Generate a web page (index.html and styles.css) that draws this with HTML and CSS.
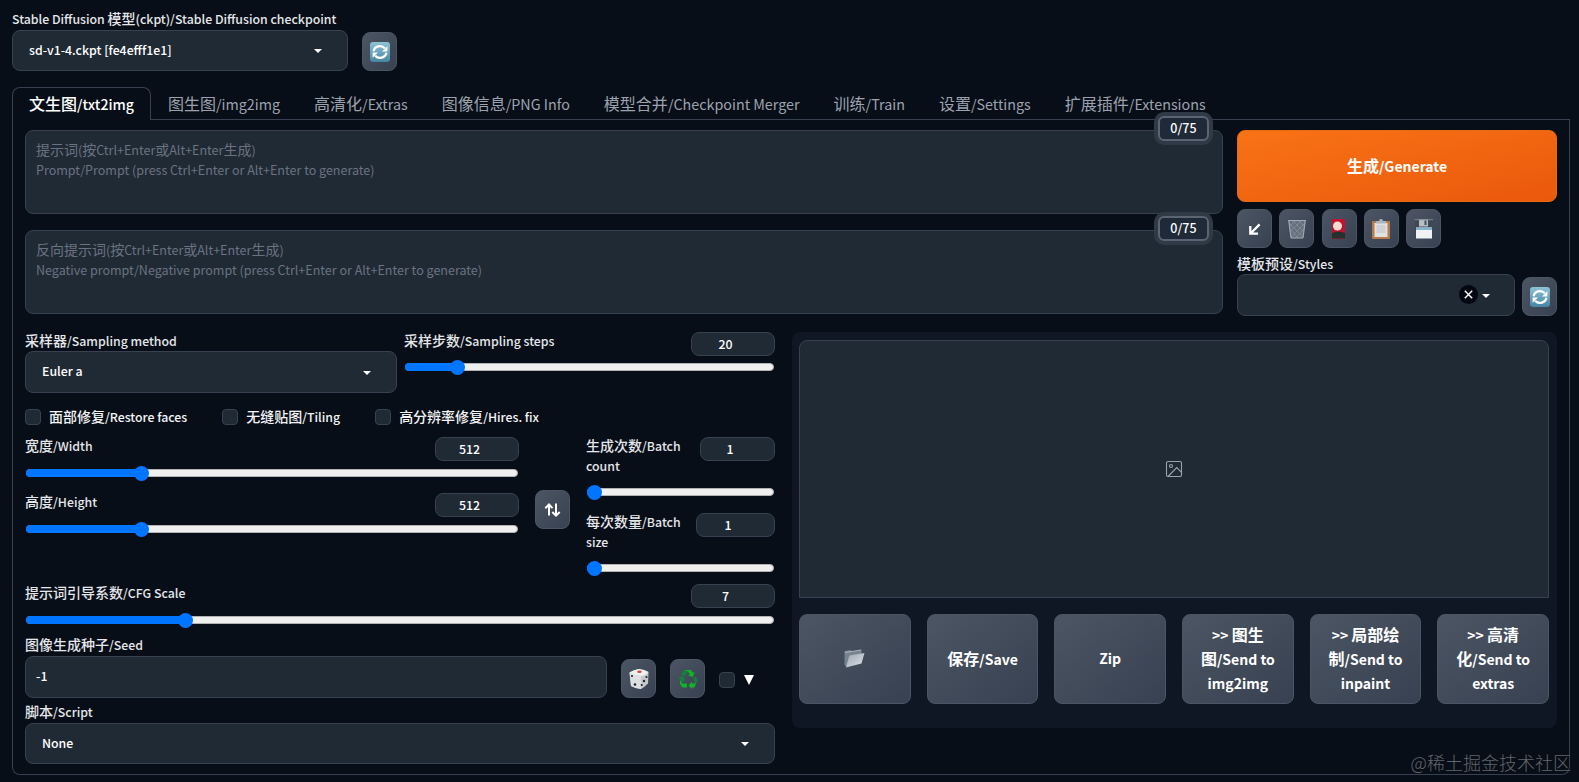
FILE: index.html
```html
<!DOCTYPE html>
<html lang="zh-CN">
<head>
    <meta charset="utf-8">
    <title>Stable Diffusion</title>
    <link rel="stylesheet" href="styles.css">
</head>
<body>
    <!-- shared icons -->
    <svg class="defs" width="0" height="0">
        <defs>
            <linearGradient id="blue" x1="0" y1="0" x2="0" y2="1">
                <stop offset="0" stop-color="#8fc3d6"/>
                <stop offset="1" stop-color="#4684a3"/>
            </linearGradient>
            <linearGradient id="silver" x1="0" y1="0" x2="1" y2="1">
                <stop offset="0" stop-color="#9ba5b0"/>
                <stop offset="1" stop-color="#dde1e8"/>
            </linearGradient>
            <symbol id="refresh" viewBox="0 0 20 20">
                <rect width="20" height="20" rx="3" fill="url(#blue)"/>
                <path d="M3.6 9.2A6.4 6 0 0 1 14.8 6.3M16.4 10.8A6.4 6 0 0 1 5.2 13.7" fill="none" stroke="#fff" stroke-width="2.2"/>
                <path d="M17.4 4.2v5.2h-5.4zM2.6 15.8v-5.2h5.4z" fill="#fff"/>
            </symbol>
        </defs>
    </svg>

    <header class="quick">
        <div class="checkpoint">
            <label class="label"><span class="en">Stable Diffusion </span>模型<span class="en">(ckpt)/Stable Diffusion checkpoint</span></label>
            <div class="select"><span class="value"><span class="en">sd-v1-4.ckpt [fe4efff1e1]</span></span><i class="caret"></i></div>
        </div>
        <button class="tool"><svg width="20" height="20"><use href="#refresh"/></svg></button>
    </header>

    <nav class="tabs">
        <a class="tab active">文生图<span class="en">/txt2img</span></a>
        <a class="tab">图生图<span class="en">/img2img</span></a>
        <a class="tab">高清化<span class="en">/Extras</span></a>
        <a class="tab">图像信息<span class="en">/PNG Info</span></a>
        <a class="tab">模型合并<span class="en">/Checkpoint Merger</span></a>
        <a class="tab">训练<span class="en">/Train</span></a>
        <a class="tab">设置<span class="en">/Settings</span></a>
        <a class="tab">扩展插件<span class="en">/Extensions</span></a>
    </nav>

    <main class="panel">
        <section class="top">
            <div class="prompts">
                <div class="prompt">
                    <span class="counter">0/75</span>
                    提示词<span class="en">(</span>按<span class="en">Ctrl+Enter</span>或<span class="en">Alt+Enter</span>生成<span class="en">)</span><br>
                    <span class="en">Prompt/Prompt (press Ctrl+Enter or Alt+Enter to generate)</span>
                </div>
                <div class="prompt">
                    <span class="counter">0/75</span>
                    反向提示词<span class="en">(</span>按<span class="en">Ctrl+Enter</span>或<span class="en">Alt+Enter</span>生成<span class="en">)</span><br>
                    <span class="en">Negative prompt/Negative prompt (press Ctrl+Enter or Alt+Enter to generate)</span>
                </div>
            </div>
            <div class="actions">
                <button class="generate">生成<span class="en">/Generate</span></button>
                <div class="tools">
                    <button class="tool">
                        <svg width="20" height="20" viewBox="0 0 20 20"><path d="M14.6 5.4L5.8 14.2M5.3 7v7.7H13" fill="none" stroke="#fff" stroke-width="2.3"/></svg>
                    </button>
                    <button class="tool">
                        <svg width="20" height="20" viewBox="0 0 20 20">
                            <path d="M1.5 1.5L4 19h12l2.500-17.500z" fill="#66717d"/>
                            <path d="M2 4l14 14M6 2l11 11M12 2l6 6M2.500 9l8 9.500M18 4L4 18M14 2L3 13M8 2L2 8M17.500 9L9 18.500" stroke="#87919c" stroke-width=".7"/>
                            <path d="M1 1.500h18M4 19h12M1.800 2L4 19M18.200 2L16 19" stroke="#a3abb5" stroke-width="1.100" fill="none"/>
                        </svg>
                    </button>
                    <button class="tool">
                        <svg width="20" height="20" viewBox="0 0 20 20">
                            <rect x="3" y="0" width="13" height="20" rx="1" fill="#c3122f"/>
                            <path d="M3 14q6.500-3 13 0v5.500H3z" fill="#27302b"/>
                            <circle cx="8.500" cy="7" r="4.500" fill="#f5dcd2"/>
                        </svg>
                    </button>
                    <button class="tool">
                        <svg width="20" height="20" viewBox="0 0 20 20">
                            <rect x="1" y="2" width="18" height="18" rx="1" fill="#b87a4b"/>
                            <path d="M3.500 4h13v14h-13z" fill="#e0e1e3"/>
                            <path d="M5.500 6h9v8h-9z" fill="#cfd1d4"/>
                            <path d="M5 2h3q0-2 2-2t2 2h3v2.500H5z" fill="#a9b5bf"/>
                        </svg>
                    </button>
                    <button class="tool">
                        <svg width="20" height="20" viewBox="0 0 20 20">
                            <path d="M1 .5h17.500v19H2.500L1 18z" fill="#3d4856"/>
                            <path d="M5 0h9v7.500H5z" fill="#b9bec5"/>
                            <path d="M10.500 1.500h2v4.500h-2z" fill="#444d59"/>
                            <path d="M2 8.500h16v11H2z" fill="#f0f2f3"/>
                            <path d="M2 8.500h16v2.500H2z" fill="#86b4cd"/>
                            <path d="M.5 .700h18.500" stroke="#7c8792"/>
                        </svg>
                    </button>
                </div>
                <div class="styles">
                    <div class="styles-field">
                        <label class="label">模板预设<span class="en">/Styles</span></label>
                        <div class="select">
                            <span class="value"></span>
                            <svg class="clear" width="19" height="19" viewBox="0 0 19 19"><circle cx="9.500" cy="9.500" r="9.500" fill="#030712"/><path d="M5.800 5.800l7.400 7.400M13.200 5.800l-7.400 7.400" stroke="#fff" stroke-width="1.400"/></svg>
                            <i class="caret"></i>
                        </div>
                    </div>
                    <button class="tool"><svg width="20" height="20"><use href="#refresh"/></svg></button>
                </div>
            </div>
        </section>

        <section class="columns">
            <div class="settings">
                <div class="sampling">
                    <div class="method">
                        <label class="label">采样器<span class="en">/Sampling method</span></label>
                        <div class="select"><span class="value"><span class="en">Euler a</span></span><i class="caret"></i></div>
                    </div>
                    <div class="slider steps">
                        <div class="head"><label class="label">采样步数<span class="en">/Sampling steps</span></label><span class="number"><span class="en">20</span></span></div>
                        <div class="track"><div class="fill" style="width: 14.100%"></div></div>
                    </div>
                </div>

                <div class="checks">
                    <label class="check"><i class="box"></i><span class="text">面部修复<span class="en">/Restore faces</span></span></label>
                    <label class="check"><i class="box"></i><span class="text">无缝贴图<span class="en">/Tiling</span></span></label>
                    <label class="check"><i class="box"></i><span class="text">高分辨率修复<span class="en">/Hires. fix</span></span></label>
                </div>

                <div class="dims">
                    <div class="size">
                        <div class="slider">
                            <div class="head"><label class="label">宽度<span class="en">/Width</span></label><span class="number"><span class="en">512</span></span></div>
                            <div class="track"><div class="fill" style="width: 23.400%"></div></div>
                        </div>
                        <div class="slider">
                            <div class="head"><label class="label">高度<span class="en">/Height</span></label><span class="number"><span class="en">512</span></span></div>
                            <div class="track"><div class="fill" style="width: 23.400%"></div></div>
                        </div>
                    </div>
                    <button class="tool swap">
                        <svg width="18" height="16" viewBox="0 0 18 16"><path d="M5 13.500V2.500M1.300 6.300L5 2.500l3.500 3.600M12 1.500v12M8.300 10l3.700 3.700L15.700 10" fill="none" stroke="#fff" stroke-width="2"/></svg>
                    </button>
                    <div class="batch">
                        <div class="slider">
                            <div class="head"><label class="label">生成次数<span class="en">/Batch<br>count</span></label><span class="number count"><span class="en">1</span></span></div>
                            <div class="track"><div class="fill" style="width: 3.700%"></div></div>
                        </div>
                        <div class="slider">
                            <div class="head"><label class="label">每次数量<span class="en">/Batch<br>size</span></label><span class="number per"><span class="en">1</span></span></div>
                            <div class="track"><div class="fill" style="width: 3.700%"></div></div>
                        </div>
                    </div>
                </div>

                <div class="slider cfg">
                    <div class="head"><label class="label">提示词引导系数<span class="en">/CFG Scale</span></label><span class="number"><span class="en">7</span></span></div>
                    <div class="track"><div class="fill" style="width: 21.300%"></div></div>
                </div>

                <div class="seed">
                    <div class="seed-field">
                        <label class="label">图像生成种子<span class="en">/Seed</span></label>
                        <div class="select input"><span class="en">-1</span></div>
                    </div>
                    <button class="tool">
                        <svg width="20" height="20" viewBox="0 0 20 20">
                            <path d="M.5 3.500Q5 .500 10 0q5 .5 9.500 3L19 14.500q-4 4-7 5.500-5-.5-10-3z" fill="#c6c8ca"/>
                            <path d="M.5 3.500Q5 .500 10 0q5 .5 9.500 3-3 3.500-7 4Q5 6.500.5 3.500z" fill="#f1f1f1"/>
                            <path d="M.5 3.800Q6 6.500 12 7.200V20q-6-.5-10-3z" fill="#dedfe0"/>
                            <ellipse cx="10.500" cy="2.700" rx="2.300" ry="1.200" fill="#d94747"/>
                            <g fill="#22262c"><circle cx="3" cy="7" r="1.100"/><circle cx="6" cy="15.500" r="1.300"/><circle cx="17.500" cy="8" r="1.100"/><circle cx="15" cy="12" r="1.200"/><circle cx="12.700" cy="16" r="1.100"/></g>
                        </svg>
                    </button>
                    <button class="tool">
                        <svg width="20" height="20" viewBox="0 0 20 20">
                            <path d="M6 1h7l1.500 2.500L16.500 3 15 8l-5-1.500 2-1L10 2.500z" fill="#0eb626"/>
                            <path d="M6 1l3.500 1.500L6.500 7.500 3 5.500z" fill="#15803a"/>
                            <path d="M.5 8l5-.5L7.500 12 5.500 11.500 4 14.500z" fill="#15803a"/>
                            <path d="M2 11l2 3.500H9V18.500H4.500L2 15z" fill="#0eb626"/>
                            <path d="M15 9l3-1.500 1.500 4-2 3.500z" fill="#15803a"/>
                            <path d="M18.500 13l-2 5.500H14V20l-3.500-3.500L14 12.500v2h3z" fill="#0eb626"/>
                        </svg>
                    </button>
                    <label class="check extra"><i class="box"></i><i class="down"></i></label>
                </div>

                <div class="script">
                    <label class="label">脚本<span class="en">/Script</span></label>
                    <div class="select"><span class="value"><span class="en">None</span></span><i class="caret"></i></div>
                </div>
            </div>

            <div class="results">
                <div class="gallery">
                    <svg width="18" height="18" viewBox="0 0 18 18" fill="none" stroke="#9ca3af" stroke-width="1.100">
                        <rect x="1.500" y="1.500" width="15" height="15" rx="1.500"/>
                        <circle cx="6" cy="6" r="1.500"/>
                        <path d="M3 16.500l8.700-9 4.800 4.800"/>
                    </svg>
                </div>
                <div class="outputs">
                    <button class="output">
                        <svg width="21" height="20" viewBox="0 0 21 20">
                            <path d="M.5 3l6-1 1.500 1.500 9.500-2v6L2 18.500.5 17z" fill="#75828f"/>
                            <path d="M1 4.500l16-2.500" stroke="#b8c1ca" stroke-width=".8"/>
                            <path d="M5 8.500q0-1 1.500-1.300L20.500 5l-3 10.500L2 19.500z" fill="url(#silver)"/>
                        </svg>
                    </button>
                    <button class="output"><span>保存<span class="en">/Save</span></span></button>
                    <button class="output"><span class="en">Zip</span></button>
                    <button class="output"><span><span class="en">&gt;&gt; </span>图生<br>图<span class="en">/Send to<br>img2img</span></span></button>
                    <button class="output"><span><span class="en">&gt;&gt; </span>局部绘<br>制<span class="en">/Send to<br>inpaint</span></span></button>
                    <button class="output"><span><span class="en">&gt;&gt; </span>高清<br>化<span class="en">/Send to<br>extras</span></span></button>
                </div>
            </div>
        </section>
    </main>
    <div class="watermark">@稀土掘金技术社区</div>
</body>
</html>
```
FILE: styles.css
```css
* { box-sizing: border-box; padding: 0; margin: 0; }
body {
    font-family: "Noto Sans CJK SC", sans-serif;
    font-size: 14px;
    line-height: 20px;
    height: 782px;
    padding: 10px 9px 0 12px;
    background-color: #080e17;
    color: #f3f4f6;
    overflow: hidden;
    position: relative;
}
button {
    font: inherit;
    color: #fff;
    border: 1px solid #4b5563;
}
svg { display: block; }
.defs { position: absolute; }
/* latin text runs smaller than the chinese next to it */
.en {
    font-size: .895em;
    font-weight: 400;
    line-height: 1;
}
.label .en, .value .en, .text .en, .input .en, .number .en, .tab.active .en {
    font-size: .88em;
    font-weight: 500;
}
.label {
    display: block;
    height: 19px;
    line-height: 17px;
    font-weight: 500;
    color: #e5e7eb;
    white-space: nowrap;
}
.select {
    display: flex;
    align-items: center;
    height: 42px;
    padding: 0 25px 2px 16px;
    background-color: #1f2a35;
    border: 1px solid #374151;
    border-radius: 8px;
    color: #fff;
}
.value {
    flex: 1;
    padding-bottom: 2px;
}
.caret {
    width: 0;
    border: 4px solid transparent;
    border-top-color: #fff;
    border-bottom-width: 0;
    margin-top: 3px;
}
.tool {
    display: flex;
    align-items: center;
    justify-content: center;
    flex: none;
    width: 35px;
    height: 39px;
    border-radius: 8px;
    background: linear-gradient(to bottom right, #4b5563, #374151);
}

/* checkpoint row */
.quick {
    display: flex;
    align-items: flex-end;
    gap: 14px;
    height: 61px;
}
.checkpoint { width: 336px; }
.checkpoint .label {
    height: 20px;
    line-height: 17px;
}
.checkpoint .select { height: 41px; }

/* tabs */
.tabs {
    display: flex;
    height: 33px;
    margin-top: 16px;
    font-size: 16px;
    border-bottom: 1px solid #374151;
}
.tab {
    height: 33px;
    padding: 0 16px;
    line-height: 30px;
    border: 1px solid transparent;
    border-bottom: 0;
    color: #9ca3af;
    white-space: nowrap;
}
.tab.active {
    color: #fff;
    font-weight: 500;
    background-color: #080e17;
    border-color: #374151;
    border-radius: 8px 8px 0 0;
}
.panel {
    height: 655px;
    padding: 10px 12px;
    border: 1px solid #374151;
    border-top: 0;
    border-radius: 0 0 8px 8px;
}

/* prompts and generate */
.top {
    display: flex;
    gap: 14px;
    height: 184px;
}
.prompts {
    flex: 1;
    display: flex;
    flex-direction: column;
    gap: 16px;
}
.prompt {
    position: relative;
    height: 84px;
    padding: 8px 10px;
    background-color: #1f2a35;
    border: 1px solid #374151;
    border-radius: 8px;
    color: #6b7280;
}
.counter {
    position: absolute;
    top: -15px;
    right: 13px;
    width: 51px;
    height: 25px;
    line-height: 20px;
    text-align: center;
    color: #fff;
    font-size: 12.500px;
    font-weight: 500;
    background-color: #1f2937;
    border: 2px solid #5b6472;
    border-radius: 6px;
    box-shadow: 0 0 0 4px #303a47;
}
.actions { width: 320px; }
.generate {
    display: block;
    width: 320px;
    height: 72px;
    padding-bottom: 3px;
    border: 1px solid #ea6a10;
    border-radius: 8px;
    background: linear-gradient(to bottom right, #f97316, #ea580c);
    font-size: 16px;
    font-weight: bold;
}
.generate .en, .output .en {
    font-size: .875em;
    font-weight: bold;
}
.tools {
    display: flex;
    gap: 7.250px;
    margin-top: 7px;
}
.styles {
    display: flex;
    align-items: flex-end;
    gap: 7px;
    margin-top: 7px;
}
.styles-field { width: 278px; }
.styles .select { padding-right: 24px; }
.clear { margin-right: 4px; }

/* two columns */
.columns {
    display: flex;
    gap: 17px;
    margin-top: 18px;
}
.settings { width: 750px; }
.sampling {
    display: flex;
    gap: 7px;
}
.method { width: 372px; }
.steps { flex: 1; }
.head {
    display: flex;
    justify-content: space-between;
}
.head .label { height: auto; }
.number {
    width: 84px;
    height: 24px;
    padding-right: 15px;
    line-height: 21px;
    text-align: center;
    color: #fff;
    background-color: #1f2a35;
    border: 1px solid #374151;
    border-radius: 8px;
}
.number.count { width: 75px; }
.number.per { width: 79px; }
.track {
    height: 8px;
    margin: 8px 1px 0;
    background-color: #efefef;
    border: 1px solid #b2b2b2;
    border-radius: 4px;
}
.steps .track { margin-top: 7px; }
.fill {
    position: relative;
    height: 8px;
    margin: -1px 0 0 -1px;
    background-color: #0075ff;
    border-radius: 4px 0 0 4px;
}
.fill::after {
    content: "";
    position: absolute;
    top: -3.500px;
    right: -8px;
    width: 15px;
    height: 15px;
    border-radius: 50%;
    background-color: #0075ff;
}
.checks {
    display: flex;
    gap: 35px;
    margin-top: 16px;
}
.check {
    display: flex;
    align-items: center;
    gap: 8px;
    height: 16px;
    font-weight: 500;
}
.text { padding-bottom: 3px; }
.box {
    width: 16px;
    height: 16px;
    background-color: #1f2a35;
    border: 1px solid #374151;
    border-radius: 4px;
}
.dims {
    display: flex;
    height: 135px;
    margin-top: 12px;
}
.size {
    display: flex;
    flex-direction: column;
    gap: 16px;
    width: 494px;
}
.swap { margin: 53px 16px 0; }
.batch {
    display: flex;
    flex-direction: column;
    gap: 17px;
    width: 189px;
}
.batch .head { height: 39px; }
.batch .label {
    line-height: 19.500px;
    margin-top: -1px;
}
.batch .track { margin-top: 12px; }
.cfg { margin-top: 12px; }
.seed {
    display: flex;
    align-items: flex-end;
    gap: 14px;
    margin-top: 12px;
}
.seed-field { width: 582px; }
.input {
    padding-left: 10px;
    margin-top: 1px;
}
.extra {
    margin-bottom: 10px;
    gap: 9px;
}
.down {
    border: 5px solid transparent;
    border-top: 10px solid #fff;
    border-bottom: 0;
}
.script { margin-top: 5px; }
.script .label {
    height: 20px;
    line-height: 17px;
}
.script .select { height: 41px; }

/* output side */
.results {
    flex: 1;
    height: 396px;
    padding: 8px 8px 8px 7px;
    background-color: #0f1624;
    border-radius: 8px;
}
.gallery {
    display: flex;
    align-items: center;
    justify-content: center;
    height: 258px;
    background-color: #1f2a35;
    border: 1px solid #374151;
    border-radius: 8px 8px 0 0;
}
.outputs {
    display: flex;
    gap: 16px;
    margin-top: 16px;
}
.output {
    flex: 1;
    display: flex;
    align-items: center;
    justify-content: center;
    height: 90px;
    padding-bottom: 2px;
    border-radius: 8px;
    background: linear-gradient(to bottom right, #4b5563, #374151);
    font-size: 16px;
    line-height: 24px;
    font-weight: bold;
    white-space: nowrap;
}
.watermark {
    position: absolute;
    right: 8px;
    bottom: 8px;
    font-size: 18px;
    line-height: 24px;
    font-weight: 300;
    color: #62666d;
}
```
